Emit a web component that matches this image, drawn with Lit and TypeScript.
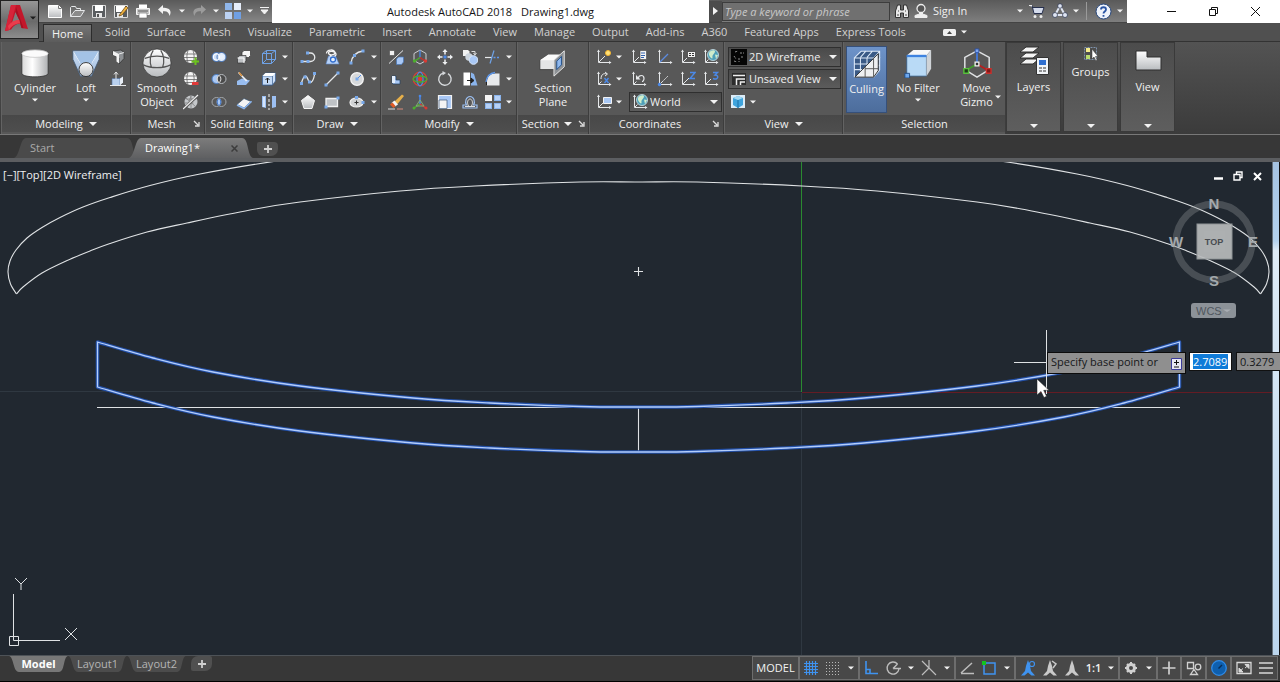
import { LitElement, html, svg, css } from "lit";
import type { SVGTemplateResult, TemplateResult } from "lit";
import { customElement } from "lit/decorators.js";
import { classMap } from "lit/directives/class-map.js";

type Point = [number, number];

/** Catmull-Rom spline through the points, written as cubic path segments. */
function spline(points: Point[]): string {
  let d = "";
  for (let i = 0; i < points.length - 1; i++) {
    const p0 = points[Math.max(i - 1, 0)];
    const p1 = points[i];
    const p2 = points[i + 1];
    const p3 = points[Math.min(i + 2, points.length - 1)];
    d += `C${p1[0] + (p2[0] - p0[0]) / 6} ${p1[1] + (p2[1] - p0[1]) / 6} ${p2[0] - (p3[0] - p1[0]) / 6} ${p2[1] - (p3[1] - p1[1]) / 6} ${p2[0]} ${p2[1]}`;
  }
  return d;
}

const AXIS = 638.5;
const mirror = (points: Point[]): Point[] =>
  points.map(([x, y]): Point => [2 * AXIS - x, y]).reverse();

const outerHalf: Point[] = [
  [16.5, 294], [10.5, 284], [8, 272], [10, 261], [16, 250], [27, 238], [42, 227.5], [60, 217.5], [83, 207],
  [110, 197.5], [150, 185.5], [200, 174], [277, 161], [400, 146], [520, 139], [638.5, 137],
];
const innerHalf: Point[] = [
  [16.5, 294], [23, 287], [42, 273], [66, 261], [90, 251], [110, 243.5], [147, 232], [187, 223],
  [250, 210], [300, 202], [400, 191], [475, 186], [580, 182], [638.5, 182],
];
const bladeHalf: Point[] = [
  [97.5, 342], [153, 358], [213, 372], [300, 386], [413, 398], [490, 403], [580, 406.5], [638.5, 407],
];

const whole = (half: Point[]) => spline([...half, ...mirror(half).slice(1)]);
const bladePath =
  `M97.5 342${whole(bladeHalf)}L1179.5 387` +
  spline([...bladeHalf, ...mirror(bladeHalf).slice(1)].map(([x, y]): Point => [x, y + 45]).reverse()) +
  "Z";

const W = "#e6e8ea";
const axes = svg`<path d="M2.500 1.500v12h12" fill="none" stroke=${W}/><path d="M1 3l1.500-2.500L4 3zM13 12l2.500 1.500L13 15z" fill=${W}/><path d="M3 13l2.500-2.500" stroke=${W}/>`;

const icons: Record<string, SVGTemplateResult> = {
  new: svg`<path d="M1.500 2.500h10l3 3v9h-13z" fill="url(#pale)" stroke="#fff"/><path d="M11.500 2.500v3h3" fill="none" stroke="#777"/>`,
  open: svg`<path d="M1.500 13.500v-9l1-1h4l1 2h4v2" fill="none" stroke=${W}/><path d="M1.500 13.500L6 7.500h9.500l-4 6z" fill="#8b8b8b" stroke=${W}/>`,
  save: svg`<path d="M1.500 2.500h13v12h-13z" fill="#5a5d60" stroke="#ddd"/><path d="M4 2h8v6H4z" fill="#fff"/><path d="M5 10h6v4H5z" fill="#e8e8e8"/><path d="M6 11h2v3H6z" fill="#555"/>`,
  saveas: svg`<path d="M1.500 2.500h13v12h-13z" fill="#5a5d60" stroke="#ddd"/><path d="M3 3h9v6H3z" fill="#fff"/><path d="M4 10h6v4H4z" fill="#e8e8e8"/><path d="M7 11l6-8 2 2-6 7-3 1z" fill="#efb23e" stroke="#5c3d12" stroke-width=".7"/>`,
  print: svg`<path d="M4 1.500h8v4H4z" fill="#fff"/><path d="M1.500 5.500h13v6h-13z" fill="#c9c9c9" stroke="#f5f5f5"/><path d="M3 8h10" stroke="#555"/><path d="M4 10h8v5H4z" fill="#fff" stroke="#666" stroke-width=".6"/>`,
  undo: svg`<path d="M6 2L1 6.500 6 11V8.300c4-.5 6 1.200 6.500 4.700C15.500 8 12 4.300 6 4.800z" fill="#f2f2f2"/>`,
  redo: svg`<path d="M10 2l5 4.500-5 4.500V8.300C6 7.800 4 9.500 3.500 13 .5 8 4 4.300 10 4.800z" fill="#9b9b9b"/>`,
  workspace: svg`<path d="M0 0h7v7H0z" fill="#8fb6ea"/><path d="M9 0h7v7H9z" fill="#e6eefb"/><path d="M0 9h7v7H0z" fill="#bcd2f3"/><path d="M9 9h7v7H9z" fill="#6f9fe3"/>`,
  sweep: svg`<path d="M3 2l8-1 3 2.500v6L9 15v-6L3 6z" fill="#8e9194" stroke="#2e2e2e" stroke-width=".7"/><path d="M3 2l6 3v9.500l-2.500-2V7.500L3 6z" fill="#f2f2f2"/><path d="M9 5l5-1.500" stroke="#fff" stroke-width=".8"/>`,
  presspull: svg`<path d="M2 7.500h8v7H2z" fill="#b9d0ee" stroke="#4d6fa0" stroke-width=".6"/><path d="M10 7.500l3-2v6l-3 3z" fill="#e8eef6"/><path d="M6 8V1.500M4 3.500l2-2.500 2 2.500M0 14.500h16" fill="none" stroke=${W}/>`,
  meshMore: svg`${ball()}<path d="M8.500 11.500h3v-3h2v3h2.500v2h-2.500V16h-2v-2.500h-3z" fill="#6cc51d"/>`,
  meshLess: svg`${ball()}<path d="M9 11h6.500v3H9z" fill="#e03a3a"/>`,
  meshRefine: svg`<circle cx="8" cy="8" r="6.500" fill="#c4c7ca"/><path d="M3 4l10 9M1.500 9h9M8 1.500v13M3 5h10M4 13l4-11" stroke="#777" stroke-width=".7" fill="none"/><path d="M0 15.500L15.500 1" stroke="#555" stroke-width="2.500"/><path d="M0 15L15 1" stroke="#f0f0f0" stroke-width="1.200"/>`,
  union: svg`<circle cx="5.500" cy="8" r="4.500" fill="#cfe0f8" stroke="#3f6fb5"/><circle cx="10.500" cy="8" r="4.500" fill="#e6effb" stroke="#3f6fb5"/><circle cx="5.500" cy="8" r="3.200" fill="none" stroke="#fff"/><circle cx="10.500" cy="8" r="3.200" fill="none" stroke="#dbe8fb"/>`,
  subtract: svg`<circle cx="5.500" cy="8" r="4.500" fill="#a9c8f5" stroke="#4b7cc0"/><circle cx="10.500" cy="8" r="4.500" fill="#4a4a4a" stroke="#b8bcc1"/><path d="M8 4.300a4.500 4.500 0 0 1 0 7.400a4.500 4.500 0 0 1 0-7.400z" fill="none" stroke="#dcdcdc"/>`,
  intersect: svg`<circle cx="5.500" cy="8" r="4.500" fill="none" stroke="#a4a8ad"/><circle cx="10.500" cy="8" r="4.500" fill="none" stroke="#a4a8ad"/><path d="M8 4.300a4.500 4.500 0 0 1 0 7.400a4.500 4.500 0 0 1 0-7.400z" fill="#a9c8f5" stroke="#3e74c8"/>`,
  extrudeFace: svg`<path d="M6 3.500L8 1.500h6.500v5l-2 2H6z" fill="#f5f5f5" stroke="#333" stroke-width=".7"/><path d="M1.500 9l2-2.500h6.500v5L8 14H1.500z" fill="#bfc2c5" stroke="#333" stroke-width=".7"/><path d="M1.500 9H8v5" fill="none" stroke="#fff"/>`,
  slice: svg`<path d="M1 10l5-2.500 8 2-4 4.500H1z" fill="#98bdf0"/><path d="M3 1l8.500 8.500-1.500 1L2 2z" fill="#e9eef5"/><path d="M3 1.500L6 5" stroke="#d98f3b" stroke-width="1.500"/>`,
  thicken: svg`<path d="M1 10.500l7-6 7 3-7 6.500z" fill="#f4f4f4" stroke="#39536f" stroke-width=".7"/><path d="M1 11l7 3.500 7-6.500v-1" fill="none" stroke="#8ab4ec" stroke-width="1.500"/>`,
  solidBox: svg`<path d="M1.500 4.500h9v10h-9zM5.500 1.500h9v9h-9zM1.500 4.500l4-3M10.500 4.500l4-3M10.500 14.500l4-4M1.500 14.500l4-4" fill="none" stroke="#6fa2e6"/>`,
  imprint: svg`<path d="M1.500 5l3-3h10v8l-3 4h-10z" fill="#cfe1f8" stroke="#3a5f90" stroke-width=".7"/><path d="M1.500 5h10v9h-10z" fill="#c3d9f5" stroke="#3a5f90" stroke-width=".7"/><path d="M6.500 12V7M4.500 9l2-2 2 2" fill="none" stroke="#1c1c1c"/><path d="M1.500 5h10l3-3h-10z" fill="#fff"/>`,
  separate: svg`<path d="M1 2h4v12l-4-1zM15 2h-4v12l4-1z" fill="#9dc0f2"/><path d="M2 3h2v10H2z" fill="#d5e5fb"/><path d="M8 0v3M8 5v3M8 10v2M8 14v2" stroke="#f4f4f4"/>`,
  polyline: svg`<path d="M2 12.500h8.500a3.500 3.500 0 0 0 0-8.500H8" fill="none" stroke=${W} stroke-width="1.300"/>${dots([[2, 12.5], [8, 12.5], [7.5, 4]])}`,
  helix: svg`<path d="M2 15l2.500-8h7L15 15z" fill="#b7d1f6" stroke="#5a8ad0" stroke-width=".6"/><path d="M2.500 4.500c0-4.500 8.500-4.500 8.500-.8 0 2.500-6.500 3-6.500.3 0-2.500 7-2 7.500 1 .5 3-5.500 3.500-6 1" fill="none" stroke="#f4f4f4" stroke-width="1.300"/><circle cx="9" cy="10.500" r="2.500" fill="#e6effb" stroke="#2e6ccf" stroke-width="1.300"/>`,
  arc: svg`<path d="M2 14C3 7 7 3 14 2" fill="none" stroke=${W} stroke-width="1.300"/>${dots([[2, 14], [5.5, 6.5], [14, 2]])}`,
  splineFit: svg`<path d="M1.500 12C4 3 6.500 4 8 8.500s5 4 6.500-5" fill="none" stroke=${W} stroke-width="1.300"/>${dots([[1.5, 12.5], [5, 6], [9.5, 11], [14.5, 2.5]])}`,
  line: svg`<path d="M2 14L14 2" stroke=${W} stroke-width="1.300"/>${dots([[2, 14], [14, 2]])}`,
  circle: svg`<circle cx="8" cy="8" r="6.300" fill="#d6d8da" stroke="#f5f5f5" stroke-width="1.300"/><path d="M8 8l4-4" stroke="#4b89e8"/>${dots([[8, 8]])}`,
  polygon: svg`<path d="M8 1.500l6.500 5-2.500 8H4l-2.500-8z" fill="url(#pale)" stroke="#f6f6f6"/>`,
  rect: svg`<path d="M2 4.500h11.500v8H2z" fill="#bfc2c5" stroke="#f2f2f2" stroke-width="1.300"/>${dots([[2, 13], [14, 4]])}`,
  ellipse: svg`<ellipse cx="7.500" cy="8.500" rx="6.500" ry="4.500" fill="#d0d2d4" stroke="#f2f2f2" stroke-width="1.200"/><path d="M5.500 8.500h4M7.500 6.500v4" stroke="#333"/>${dots([[7.5, 3.5], [14, 8.5]])}`,
  align3d: svg`<path d="M1 14.500L15 1.500" stroke=${W}/><path d="M1.500 1.500h5v5h-5z" fill="#f2f2f2" stroke="#444" stroke-width=".6"/><path d="M8.500 10l2-2h5v5l-2 2.500h-5z" fill="#a9c8f5" stroke="#4677b8" stroke-width=".7"/>`,
  gizmoMove: svg`<path d="M8 1l6 3.500v7L8 15l-6-3.500v-7z" fill="none" stroke="#c9ccd0"/><path d="M8 8.500v-7" stroke="#4b89e8" stroke-width="1.300"/><path d="M8 8.500L3 12" stroke="#4caf2e" stroke-width="1.400"/><path d="M8 8.500l5 3.500" stroke="#c9302c" stroke-width="1.400"/><circle cx="2.500" cy="12" r="1.700" fill="#4caf2e"/><circle cx="13.500" cy="12" r="1.700" fill="#d83a34"/>`,
  move: svg`<path d="M8 0l2.600 3H5.400zM8 16l2.600-3H5.400zM0 8l3-2.600v5.200zM16 8l-3-2.600v5.200z" fill="#eef0f2"/><path d="M8 2.500v3M8 10.500v3M2.500 8h3M10.500 8h3" stroke="#eef0f2" stroke-width="1.500"/><path d="M6.500 6.500h3v3h-3z" fill="#4b89e8"/>`,
  copy: svg`<path d="M1 1h5l1.500 1.500V7H1z" fill="#f2f2f2"/><circle cx="7" cy="8" r="3.700" fill="#cdd5de"/><circle cx="11.500" cy="11" r="4.300" fill="#a9c8f5" stroke="#d6e6fb"/><path d="M9.500 2.500H13V5M11.500 4L13 6l1.500-2" fill="none" stroke="#ddd"/>`,
  trim: svg`<path d="M0 8.500h7" stroke=${W} stroke-width="1.200"/><path d="M8.500 8.500h2M12 8.500h2" stroke="#5f98ea" stroke-width="1.300"/><path d="M5 14.500l4-13" stroke="#6fa2e6" stroke-width="1.200"/>`,
  fillet3d: svg`<path d="M4 5h4v4h4v4H5L4 12z" fill="#a9c8f5" stroke="#24405f" stroke-width=".7"/><path d="M4 5h3v7H4z" fill="#e5effc"/>`,
  gizmoRotate: svg`<circle cx="8" cy="8" r="6.800" fill="none" stroke="#d0413b" stroke-width="1.300"/><ellipse cx="8" cy="8" rx="3" ry="6.800" fill="none" stroke="#4b89e8" stroke-width="1.300"/><ellipse cx="8" cy="8" rx="6.800" ry="3" fill="none" stroke="#4caf2e" stroke-width="1.300"/><circle cx="8" cy="8" r="2.300" fill="#e63a2e"/>`,
  rotate: svg`<path d="M6 2.200A6.200 6.200 0 1 0 11 2.700" fill="none" stroke="#d5d8db" stroke-width="1.400"/><path d="M5.500 0v4.500L9 2z" fill="#d5d8db"/>`,
  mirrorIc: svg`<path d="M1.500 1.500H8v13H1.500z" fill="#fff"/><path d="M9 1.500l3 1.500 3.500 11.500H9z" fill="#8ab4ec"/><path d="M5 9.500h5M9 7l3 2.500L9 12z" stroke="#222" fill="#222"/>`,
  fillet: svg`<path d="M2 14.500V10c0-5 4-7.500 8-7.500h4.500v12z" fill="#e8eaec"/><path d="M1.500 14V10c0-5 4-8 8-8" fill="none" stroke="#222"/><path d="M1 11C2 4 6 2 10 1.500" fill="none" stroke="#5f98ea" stroke-width="1.300"/>`,
  erase: svg`<path d="M6 8l8-7.500L16 2l-6.500 8z" fill="#e7b04a"/><path d="M3.500 9l3-2.500 3.500 4L7 12.500z" fill="#f4f4f4"/><path d="M2 10.500L4.500 8.500l3 3.500-2 2z" fill="#e05a25"/><path d="M0 15h7" stroke="#ddd"/><path d="M9 15h6" stroke="#d98a7a"/>`,
  gizmoScale: svg`<path d="M8 10V2" stroke="#4b89e8" stroke-width="1.500"/><path d="M8 10l-6 4" stroke="#4caf2e" stroke-width="1.500"/><path d="M8 10l6 4" stroke="#d83a34" stroke-width="1.500"/><path d="M8 6l4 6H4z" fill="none" stroke="#7fae74"/><circle cx="8" cy="2" r="1.300" fill="#4b89e8"/><circle cx="2" cy="14" r="1.500" fill="#4caf2e"/><circle cx="14" cy="14" r="1.500" fill="#d83a34"/>`,
  scale: svg`<path d="M1.500 1.500h13v13h-13z" fill="#a9c8f5" stroke="#f2f2f2" stroke-width="1.200"/><path d="M2 6h8v8.500H2z" fill="#f4f4f4" stroke="#3c5878" stroke-width=".7"/>`,
  offset: svg`<path d="M1 14h14v-3h-3.500c2-3 .5-8.500-3.500-8.500S2.500 8 4.500 11H1z" fill="none" stroke="#9cc0f2" stroke-width="1.200"/><path d="M3 12.500h10M6.500 12C4.500 8.500 6 5 8 5s3.500 3.500 1.500 7" fill="none" stroke="#e0e2e4"/>`,
  array: svg`<path d="M0 1h7v6H0z" fill="#f5f5f5"/><path d="M9 1h7v6H9zM0 9h7v6H0zM9 9h7v6H9z" fill="#8ab4ec"/><path d="M10 2h5v4h-5zM1 10h5v4H1zM10 10h5v4h-5z" fill="#b7d1f6"/>`,
  ucs: svg`${axes}<circle cx="12" cy="4" r="2.500" fill="#ffe27a" stroke="#f5b52c"/><path d="M5 11l4-4" stroke=${W}/>`,
  ucsX: svg`${axes}<path d="M5 8c0-5 3-6 6-5M9 1l2.500 2L9 5" fill="none" stroke=${W}/><path d="M8.500 7l4 5M12.500 7l-4 5" stroke="#4b89e8" stroke-width="1.400"/>`,
  ucsView: svg`${axes}<path d="M7.500 3.500h8v6h-8z" fill="#a9c8f5" stroke="#f2f2f2"/><path d="M4 12l3-3" stroke=${W}/>`,
  ucsNamed: svg`${axes}<path d="M9 1.500h6.500v9H9z" fill="#f5f5f5" stroke="#444" stroke-width=".6"/><path d="M10 4h4M10 6.500h4M10 8.500h3" stroke="#3262ad"/><path d="M4 12l4-4" stroke=${W}/>`,
  ucsPrev: svg`${axes}<path d="M7 7.500c1-4 6-4 6 0 0 1.500-1 3-2 3" fill="none" stroke=${W} stroke-width="1.200"/><path d="M5 4v4.500h4.500z" fill=${W}/>`,
  ucsFace: svg`${axes}<path d="M3 13l8-8" stroke="#5c8be0" stroke-width="1.300"/>`,
  ucsOrigin: svg`${axes}<path d="M3 13l8-8" stroke=${W} stroke-dasharray="2 1"/><circle cx="2.500" cy="13.500" r="1.700" fill="#4b89e8"/>`,
  ucsObject: svg`${axes}<path d="M7.500 2.500h8v6h-8z" fill="#f2f2f2" stroke="#333" stroke-width=".7"/><path d="M9 4.500h5M9 6.500h5" stroke="#333" stroke-dasharray="2 1"/><path d="M4 12l3-3" stroke=${W}/>`,
  ucsZ: svg`${axes}<path d="M10 1.500h5l-5 6h5" fill="none" stroke="#4b89e8" stroke-width="1.400"/><path d="M4 12l5-5" stroke=${W}/>`,
  ucs3: svg`${axes}<path d="M10 1.500h4.500L12 4c4 0 3.500 4.500-.5 4L10 7.500" fill="none" stroke="#4b89e8" stroke-width="1.400"/><path d="M4 12l4-4" stroke=${W}/>`,
  ucsWorld: svg`${axes}<circle cx="10" cy="6" r="5.500" fill="#4d9fb8" stroke="#cfe6ee" stroke-width=".8"/><path d="M6 4c1-3 6-3.500 6-1.500S9 5.500 9.500 8.500 5 7 6 4zM12 5.500l3 .5-2 4z" fill="#cfeccb"/>`,
  style2d: svg`<path d="M0 0h16v16H0z" fill="#050505"/><path d="M4 3l3-1M9 4h4M3 7l2 3M8 9v4M10 8h3M3 12l3 1" stroke="#8d8d8d" stroke-dasharray="2 1"/>`,
  savedView: svg`<path d="M1 2h14v12H1z" fill="#2c2c2c"/><path d="M2 4.500h12M5.500 14V8H14M9.500 14v-3H14" fill="none" stroke="#eee" stroke-width="1.500"/>`,
  viewCubeIc: svg`<path d="M1 1h14v13H1z" fill="#dcecf8"/><path d="M3 4l5-2 5 2v7l-5 3-5-3z" fill="#3fa4dd"/><path d="M3 4l5 2 5-2-5-2z" fill="#a6dcf7"/><path d="M8 6v8" stroke="#1a6fa5"/>`,
};

function ball() {
  return svg`<circle cx="7.500" cy="7.500" r="6.500" fill="#f4f4f4"/><path d="M1.500 5h12M1 8.500h13M2 11.500h11" stroke="#666" stroke-width=".8" fill="none"/><path d="M5 1.500c-1.500 4-1.500 8 0 12M10 1.500c1.500 4 1.500 8 0 12" stroke="#666" stroke-width=".8" fill="none"/>`;
}
function dots(at: Point[]) {
  return at.map(([x, y]) => svg`<rect x=${x - 1.5} y=${y - 1.5} width="3" height="3" fill="#79a9ea"/>`);
}

const bigIcons: Record<string, SVGTemplateResult> = {
  cylinder: svg`<path d="M2 6v21c0 5 28 5 28 0V6z" fill="url(#drum)" stroke="#2f2f2f" stroke-width=".8"/><ellipse cx="16" cy="6" rx="14" ry="4" fill="#fbfbfb" stroke="#c4c4c4" stroke-width=".8"/>`,
  loft: svg`<path d="M2 3h28v9l-8 18H10L2 12z" fill="url(#blue)" stroke="#3b536f" stroke-width=".8"/><path d="M3 4l7 12M29 4l-7 12" stroke="#fff"/><path d="M3 4h26l-7 12H10z" fill="#a3c2e6"/><circle cx="16" cy="23" r="7.500" fill="url(#pale)" stroke="#333"/>`,
  smooth: svg`<circle cx="16" cy="16" r="15" fill="url(#pale)" stroke="#333" stroke-width=".8"/><path d="M3 11c8-3 18-3 26 0M1.500 18c8 4 21 4 29 0M12 2.500c-4 6-4 12-2 18M20 2.500c4 6 4 12 2 18" fill="none" stroke="#555" stroke-width="1.300"/>`,
  section: svg`<path d="M2 13l9-6h12v11l-4 5H2z" fill="#e4e5e6" stroke="#333" stroke-width=".8"/><path d="M2 13h16l6-6H11z" fill="#fbfbfb"/><path d="M17 13l11-10v17L17 30z" fill="#8d9195" stroke="#e9e9e9"/><path d="M20 14l5-5v9l-5 5z" fill="#8fb8ee" stroke="#1f4d86"/>`,
  culling: svg`<path d="M3 9l8-7h19l-3 19-6 9H3z" fill="#3a5a86"/><path d="M2.500 9.500h21v20h-21zM9 9v20M16 9v20M3 16h20M3 22h20M9.500 2.500h20v20M2.500 9.500l7-7M23.500 9.500l6-7M23.500 29.500l6-7M16 9l6-7M9 9l6-7M26 6v20M24 16l6-7M24 22l6-6" fill="none" stroke="#dde9f8" stroke-width="1.100"/><path d="M3 30L23 10l5-5v18l-5 7z" fill="#eef0f2" stroke="#2e2e2e"/><path d="M23 10v20M14 19v11M14 21h14" stroke="#555"/>`,
  nofilter: svg`<path d="M4 8h21v22H4z" fill="#b9daf6" stroke="#315a85" stroke-width=".8"/><path d="M4 8l7-6h19l-5 6z" fill="#f8f8f8"/><path d="M25 8l5-6v20l-5 8z" fill="#cfd3d7"/><path d="M4 8.500h21" stroke="#3e83e0" stroke-width="2.500"/><path d="M2 27h5v5H2z" fill="#6ea8ee" stroke="#1f4d86"/>`,
  gizmo: svg`<path d="M16 3l13 7v13l-13 8-13-8V10z" fill="none" stroke="#dfe1e3" stroke-width="1.600"/><path d="M16 16V3" stroke="#4478d8" stroke-width="2"/><path d="M16 17L4 24" stroke="#3f9a2c" stroke-width="2"/><path d="M16 17l12 7" stroke="#b52020" stroke-width="2"/><path d="M14 1h4v4h-4z" fill="#7fa6ee" stroke="#2c4fa0"/><path d="M2 22h5v5H2z" fill="#1d3a1a" stroke="#58c03c" stroke-width="1.500"/><path d="M26 22h5v5h-5z" fill="#7c1b1b" stroke="#c9302c" stroke-width="1.500"/><path d="M14 15h4v4h-4z" fill="#333" stroke="#f2f2f2" stroke-width="1.400"/>`,
  layers: svg`<path d="M2 19l6-5h13l-6 5zM2 13l6-5h13l-6 5zM2 7l6-5h13l-6 5z" fill="#f4f4f4" stroke="#2e2e2e"/><path d="M18.500 12.500h12v17h-12z" fill="#f1f4f8" stroke="#333"/><path d="M21 15h7v5h-7z" fill="#2f6fd0"/><path d="M21 23h7M21 26h7" stroke="#333" stroke-dasharray="3 1"/>`,
  groups: svg`<path d="M9.500 9.500h12v12h-12z" fill="none" stroke="#7f93ad" stroke-dasharray="2 1"/><path d="M11 10h4v4h-4z" fill="#f4eb8c"/><path d="M11 17h4v4h-4z" fill="#b9dc6e"/><path d="M17 11v10l2-2 2 4 1-1-1.500-3.500H23z" fill="#fff" stroke="#333" stroke-width=".5"/>`,
  viewport: svg`<path d="M4 6h11v6h14v13H4z" fill="url(#pale)" stroke="#2f2f2f"/>`,
};

interface Item { name: string; label: string }
const i = (name: string, label: string): Item => ({ name, label });

const ribbonTabs = ["Home", "Solid", "Surface", "Mesh", "Visualize", "Parametric", "Insert", "Annotate", "View", "Manage", "Output", "Add-ins", "A360", "Featured Apps", "Express Tools"];

@customElement("app-root")
export class AppRoot extends LitElement {
  static styles = css`
    :host { display: flex; flex-direction: column; height: 100vh; min-width: 1180px; overflow: hidden; background: #373737; color: #f0f0f0; font: 11px/14px "Open Sans", "Noto Sans", sans-serif; }
    * { box-sizing: border-box; }
    button, input, select { font: inherit; color: inherit; margin: 0; padding: 0; border: 0; background: none; }
    button { display: flex; align-items: center; justify-content: center; flex: none; white-space: nowrap; }
    svg { display: block; flex: none; }
    .defs { height: 0; width: 0; }

    .head { display: grid; grid-template-columns: 39px 1fr; grid-template-rows: 23px 19px; background: #505050; }
    .app { grid-row: 1 / 3; align-self: start; height: 39px; background: linear-gradient(#969696, #6a6a6a 55%, #8d8d8d); border: 1px solid #222; justify-content: space-between; padding: 0 2px 4px 3px; }
    .title { display: flex; background: #fff; }
    .qat { display: flex; align-items: center; width: 233px; padding-left: 5px; background: linear-gradient(#5a5a5a, #868686); border-bottom: 1px solid #444; }
    .qat button { width: 22px; height: 20px; }
    .qat .drop { width: 12px; }
    .qat .last { width: 16px; }
    .name { flex: 1; display: flex; align-items: center; justify-content: center; gap: 9px; color: #141414; }
    .info { display: flex; align-items: center; width: 418px; padding-right: 2px; background: linear-gradient(#5a5a5a, #7e7e7e); border-bottom: 1px solid #444; }
    .info .toggle { width: 13px; height: 21px; background: #4c4c4c; }
    .search { width: 168px; height: 19px; padding: 0 2px; background: #707070; border: 1px solid #3d3d3d; font-style: italic; }
    .search::placeholder { color: #c8c8c8; opacity: 1; }
    .info .tool { width: 23px; height: 20px; }
    .sign { gap: 4px; justify-content: flex-start; }
    .grow { flex: 1; }
    .info .drop { width: 10px; }
    .rule { width: 1px; height: 18px; margin: 0 5px; background: #9a9a9a; }
    .win { display: flex; width: 153px; padding-left: 23px; }
    .win button { width: 42px; height: 22px; }

    .tabs { display: flex; gap: 1px; padding-left: 4px; border-bottom: 1px solid #333; }
    .tabs button { padding: 0 8px; color: #d2d2d2; }
    .tabs .on { background: linear-gradient(#747474, #5c5c5c); border: 1px solid #2c2c2c; border-bottom: 0; color: #f4f4f4; margin: 1px 4px -1px 0; }
    .tabs .collapse { margin-left: 20px; gap: 5px; }

    .ribbon { display: flex; height: 93px; padding-left: 1px; background: linear-gradient(#535353, #3b3b3b); border-bottom: 1px solid #787878; }
    .panel { display: flex; flex-direction: column; background: #585858; border-right: 1px solid #3d3d3d; border-left: 1px solid #636363; padding-bottom: 2px; }
    .body { flex: 1; display: grid; grid-template-rows: 22px 22px 23px; align-content: start; align-items: center; justify-items: center; padding-top: 4px; }
    .caption { display: flex; align-items: center; justify-content: center; gap: 6px; height: 17px; padding: 0 4px; background: linear-gradient(#484848, #4e4e4e); white-space: nowrap; }
    .caption .launch { margin-left: auto; }
    .caption .lead { margin-left: auto; }
    .modeling { width: 130px; } .modeling .body { grid-template-columns: 50px 52px 12px; padding-left: 8px; }
    .mesh { width: 74px; } .mesh .body { grid-template-columns: 50px 18px; }
    .solid { width: 88px; } .solid .body { grid-template-columns: 24px 26px 24px 8px; padding-left: 1px; }
    .draw { width: 88px; } .draw .body { grid-template-columns: 24px 24px 26px 8px; padding-left: 2px; }
    .modify { width: 136px; } .modify .body { grid-template-columns: 24px 24px 26px 24px 22px 10px; padding-left: 2px; }
    .section { width: 72px; } .section .caption { gap: 5px; padding: 0 3px; }
    .coords { width: 135px; } .coords .body { grid-template-columns: 20px 10px 30px 22px 24px 22px; padding-left: 4px; }
    .view { width: 119px; } .view .body { grid-template-columns: 20px 10px 1fr; padding: 4px 1px 0 3px; }
    .select { width: 163px; } .select .body { grid-template-columns: 41px 62px 55px; padding-left: 2px; }
    .ic { width: 100%; height: 22px; }
    .big { grid-row: span 3; flex-direction: column; justify-content: flex-start; width: 100%; height: 67px; gap: 1px; }
    .big .pic { height: 34px; display: flex; align-items: center; }
    .big .menu { margin-top: 2px; }
    .pressed { background: linear-gradient(#6d93c9, #4d6d9c); border: 1px solid #36507a; }
    .gizmo { position: relative; }
    .gizmo .menu { position: absolute; right: 3px; bottom: 14px; }
    .combo { position: relative; height: 20px; background: linear-gradient(#4a4a4a, #5c5c5c); border: 1px solid #2f2f2f; display: flex; align-items: center; padding-left: 2px; gap: 2px; }
    .combo select { appearance: none; flex: 1; min-width: 0; height: 18px; }
    .combo option { color: #222; }
    .combo .menu { position: absolute; right: 3px; top: 7px; pointer-events: none; }
    .view .combo { grid-column: 1 / -1; width: 100%; }
    .world { grid-column: 3 / 7; width: 93px; justify-self: end; }
    .folds { display: flex; }
    .fold { display: flex; flex-direction: column; align-items: center; justify-content: space-between; width: 55px; height: 90px; margin: 0 2px 0 0; padding-bottom: 3px; background: linear-gradient(#4c4c4c, #5e5e5e); border: 1px solid #3a3a3a; }
    .fold .face { flex-direction: column; gap: 1px; }

    .files { display: flex; height: 27px; padding: 3px 0 0 20px; border-bottom: 4px solid #5c5e61; background: #373737; }
    .file { position: relative; width: 115px; height: 20px; padding: 0 12px 0 10px; justify-content: space-between; color: #aaa; }
    .file .shape, .sheet .shape { position: absolute; inset: 0; width: 100%; height: 100%; overflow: visible; }
    .file span, .file .x, .sheet span { position: relative; }
    .file.on, .sheet.on { color: #fff; }
    .plus { width: 21px; height: 14px; margin: 4px 0 0 7px; background: #505050; border-radius: 2px 4px 7px 6px; }

    .stage { flex: 1; position: relative; min-height: 0; background: #212830; overflow: hidden; }
    .drawing { width: 100%; height: 100%; }
    .scroll { position: absolute; top: 0; right: 0; bottom: 0; width: 8px; border-left: 1px solid #68737c; border-right: 1px solid #111; background: linear-gradient(#a5c3e2, #b4d2ee 16%, #deebf6 18%, #bcd6ee); }
    .vlabel { position: absolute; left: 3px; top: 6px; display: flex; }
    .mdi { position: absolute; top: 7px; right: 16px; display: flex; gap: 5px; }
    .mdi button { width: 14px; height: 14px; }
    .cube { position: absolute; top: 32px; right: 20px; width: 92px; height: 100px; font: bold 15px/16px "Liberation Sans", Arial, sans-serif; }
    .face-name { font-size: 9px; }
    .wcs { position: absolute; top: 141px; right: 44px; width: 45px; height: 15px; padding: 0 5px; justify-content: space-between; background: #8c9298; border-radius: 3px; color: #4f565d; font: 11px/14px "Liberation Sans", Arial, sans-serif; }
    .prompt { position: absolute; top: 190px; left: 1047px; display: flex; align-items: flex-start; height: 22px; gap: 3px; color: #16181a; }
    .say { display: flex; align-items: flex-start; width: 139px; height: 22px; padding: 2px 3px 0; justify-content: space-between; background: #8f8f8f; border: 1px solid #0c0c0c; white-space: nowrap; }
    .say svg { margin-top: 3px; }
    .val { display: flex; align-items: center; height: 19px; padding: 0 3px; width: 43px; background: #fff; border: 1px solid #111; }
    .val input { width: 35px; height: 15px; }
    .val.live input { background: #0f7bd8; color: #fff; }
    .val.idle { background: #8f8f8f; width: 48px; margin-left: 1px; }

    .foot { display: flex; height: 27px; padding-bottom: 1px; background: #373737; border-top: 1px solid #4d5257; border-bottom: 1px solid #000; justify-content: space-between; }
    .sheets { display: flex; padding-left: 9px; }
    .sheet { position: relative; width: 59px; height: 16px; color: #b4b4b4; }
    .sheet.on { font-weight: bold; }
    .foot .plus { height: 15px; margin: 0 0 0 5px; border-radius: 7px 2px 7px 2px; }
    .status { display: flex; margin-right: 2px; }
    .box { display: flex; align-items: center; background: #484848; border: 1px solid #6d6d6d; color: #f2f2f2; }
    .box button { height: 22px; width: 22px; }
    .box .drop { width: 14px; }
    .box .word { width: 45px; }
    .box .ratio { width: 21px; font-weight: 600; }
    .pad { padding-left: 1px; }
  `;

  private arrow = (w = 7): TemplateResult =>
    html`<svg class="menu" width=${w} height="4" viewBox="0 0 8 4" aria-hidden="true"><path d="M0 0h8L4 4z" fill="#f2f2f2"/></svg>`;

  private glyph = (name: string, size = 16) =>
    html`<svg width=${size} height=${size} viewBox="0 0 16 16" aria-hidden="true">${icons[name]}</svg>`;

  private small = (m: Item) => html`<button class="ic" aria-label=${m.label}>${this.glyph(m.name)}</button>`;
  private drop = (label: string) => html`<button class="drop" aria-label=${`${label} menu`}>${this.arrow(6)}</button>`;
  private dropCell = (label: string) => html`<button class="ic" aria-label=${`${label} menu`}>${this.arrow(6)}</button>`;

  private big = (name: string, lines: string[], opts: { menu?: boolean; extra?: string } = {}) => html`
    <button class=${`big ${opts.extra ?? ""}`}>
      <span class="pic"><svg width="30" height="30" viewBox="0 0 32 32" aria-hidden="true">${bigIcons[name]}</svg></span>
      <span>${lines.map((t, n) => (n ? html`<br />${t}` : t))}</span>
      ${opts.menu ? this.arrow(6) : ""}
    </button>`;

  private panel = (cls: string, caption: string, body: unknown, menu = false, launch = false) => html`
    <section class=${`panel ${cls}`}>
      <div class="body">${body}</div>
      <div class="caption">
        <span class=${classMap({ lead: launch })}>${caption}</span>${menu ? this.arrow(8) : ""}
        ${launch ? html`<button class="launch" aria-label=${`${caption} settings`}><svg width="7" height="7" viewBox="0 0 7 7"><path d="M1 1l4 4M6 2v4H2" fill="none" stroke="#ddd" stroke-width="1.300"/></svg></button>` : ""}
      </div>
    </section>`;

  private fold = (name: string, label: string, short = false) => html`
    <div class="fold">
      <button class="face">
        <svg width="32" height=${short ? 21 : 36} viewBox=${short ? "0 5 32 21" : "0 -2 32 36"} aria-hidden="true">${bigIcons[name]}</svg>
        <span>${label}</span>
      </button>
      ${this.arrow(8)}
    </div>`;

  private header() {
    return html`
      <header class="head">
        <button class="app" aria-label="Application menu">
          <svg width="24" height="28" viewBox="0 0 24 28"><path d="M7 1h9l8 24-6.500-1-1.300-4.500c-4 .2-7 2.500-9 6L1 27z" fill="#c3172b"/><path d="M11.500 8L8 19c2-1.500 4.500-2.700 7.300-3z" fill="#7d7d7d"/><path d="M11.500 8l3.800 8 1 3.500 1.200 4.500 2 .3L12 3z" fill="#a51022"/><path d="M7 1h5L5 26.200 1 27z" fill="#d6243a"/><path d="M4 22c3-4.500 7-6.500 11.300-6l.9 3.500C11 19.500 7.500 22 5 26z" fill="#ea3d4c"/></svg>
          <svg width="6" height="4" viewBox="0 0 8 4"><path d="M0 0h8L4 4z" fill="#1c1c1c"/></svg>
        </button>
        <div class="title">
          <div class="qat">
            ${[["new", "New"], ["open", "Open"], ["save", "Save"], ["saveas", "Save As"], ["print", "Plot"], ["undo", "Undo"]].map(
              ([n, l]) => html`<button aria-label=${l}>${this.glyph(n)}</button>`)}
            ${this.drop("Undo")}
            <button aria-label="Redo">${this.glyph("redo")}</button>${this.drop("Redo")}
            <button aria-label="Workspace">${this.glyph("workspace")}</button>${this.drop("Workspace")}
            <button class="last" aria-label="Customize"><svg width="9" height="8" viewBox="0 0 9 8"><path d="M0 .5h9M1 3h7L4.500 7z" fill="#f2f2f2" stroke="#f2f2f2"/></svg></button>
          </div>
          <div class="name"><span>Autodesk AutoCAD 2018</span><span>Drawing1.dwg</span></div>
          <div class="info">
            <button class="toggle" aria-label="Toggle search"><svg width="5" height="8" viewBox="0 0 5 8"><path d="M0 0l5 4-5 4z" fill="#f2f2f2"/></svg></button>
            <input class="search" type="search" aria-label="Search" placeholder="Type a keyword or phrase" />
            <button class="tool" aria-label="Find"><svg width="16" height="16" viewBox="0 0 16 16"><path d="M1.500 14.500V8l2-6h3v5h3V2h3l2 6v6.500h-5V10h-3v4.500z" fill="#e9e9e9" stroke="#333"/><path d="M3 12h2M11 12h2M4 8h1M11 8h1" stroke="#444"/></svg></button>
            <button class="sign"><svg width="16" height="16" viewBox="0 0 16 16"><circle cx="8" cy="5.500" r="4" fill="#555" stroke="#eee" stroke-width="1.300"/><path d="M6.500 9v2L2 12.500v2h12v-2L9.500 11V9" fill="#eee" stroke="#eee"/></svg><span>Sign In</span></button>
            <span class="grow"></span>${this.drop("Account")}
            <button class="tool" aria-label="Store"><svg width="16" height="16" viewBox="0 0 16 16"><path d="M0 2.500h3l2 8h8l2-6H4" fill="#d5dcec" stroke="#27304e"/><path d="M0 2.500h3" stroke="#eee"/><circle cx="6" cy="13.500" r="1.500" fill="#eee"/><circle cx="12" cy="13.500" r="1.500" fill="#eee"/></svg></button>
            <button class="tool" aria-label="Autodesk App Store"><svg width="16" height="16" viewBox="0 0 16 16"><path d="M8 3L3 12h10z" fill="none" stroke="#dfe5f2" stroke-width="2"/><circle cx="8" cy="3" r="2.300" fill="#dfe5f2" stroke="#27304e" stroke-width=".7"/><circle cx="3" cy="12" r="2.500" fill="#dfe5f2" stroke="#27304e" stroke-width=".7"/><circle cx="13" cy="12" r="2.500" fill="#dfe5f2" stroke="#27304e" stroke-width=".7"/></svg></button>
            ${this.drop("Apps")}<span class="rule"></span>
            <button class="tool" aria-label="Help"><svg width="17" height="17" viewBox="0 0 17 17"><circle cx="8.500" cy="8.500" r="7.500" fill="#eef3fb" stroke="#27477d"/><path d="M6 6.500C6 3.500 11 3.500 11 6.500c0 2-2.500 2-2.500 4M8.500 12v1.800" fill="none" stroke="#2a55a5" stroke-width="1.800"/></svg></button>
            ${this.drop("Help")}
          </div>
          <div class="win">
            <button aria-label="Minimize"><svg width="11" height="11" viewBox="0 0 11 11"><path d="M1 5.500h9" stroke="#111"/></svg></button>
            <button aria-label="Restore"><svg width="11" height="11" viewBox="0 0 11 11"><path d="M1.500 3.500h6v6h-6zM3.500 3V1.500h6v6H8" fill="none" stroke="#111"/></svg></button>
            <button aria-label="Close"><svg width="11" height="11" viewBox="0 0 11 11"><path d="M1 1l9 9M10 1l-9 9" stroke="#111"/></svg></button>
          </div>
        </div>
        <nav class="tabs">
          ${ribbonTabs.map((t, n) => html`<button class=${classMap({ on: n === 0 })}>${t}</button>`)}
          <button class="collapse" aria-label="Ribbon display"><svg width="13" height="7" viewBox="0 0 13 7"><rect width="13" height="7" rx="1.500" fill="#efefef"/><path d="M4 5h5L6.500 2z" fill="#444"/></svg>${this.arrow(6)}</button>
        </nav>
      </header>`;
  }

  private ribbon() {
    const row = (items: Item[], menu: boolean) => html`${items.map(this.small)}${menu ? this.dropCell(items[items.length - 1].label) : ""}`;
    return html`
      <div class="ribbon">
        ${this.panel("modeling", "Modeling", html`
          ${this.big("cylinder", ["Cylinder"], { menu: true })}${this.big("loft", ["Loft"], { menu: true })}
          ${this.small(i("sweep", "Polysolid"))}${this.small(i("presspull", "Presspull"))}`, true)}
        ${this.panel("mesh", "Mesh", html`
          ${this.big("smooth", ["Smooth", "Object"])}
          ${row([i("meshMore", "Smooth More"), i("meshLess", "Smooth Less"), i("meshRefine", "Refine Mesh")], false)}`, false, true)}
        ${this.panel("solid", "Solid Editing", html`
          ${row([i("union", "Union"), i("extrudeFace", "Extrude Faces"), i("solidBox", "Extract Edges")], true)}
          ${row([i("subtract", "Subtract"), i("slice", "Slice"), i("imprint", "Move Faces")], true)}
          ${row([i("intersect", "Intersect"), i("thicken", "Thicken"), i("separate", "Separate")], true)}`, true)}
        ${this.panel("draw", "Draw", html`
          ${row([i("polyline", "Polyline"), i("helix", "Helix"), i("arc", "Arc")], true)}
          ${row([i("splineFit", "Spline"), i("line", "Line"), i("circle", "Circle")], true)}
          ${row([i("polygon", "Polygon"), i("rect", "Rectangle"), i("ellipse", "Ellipse")], true)}`, true)}
        ${this.panel("modify", "Modify", html`
          ${row([i("align3d", "3D Align"), i("gizmoMove", "3D Move"), i("move", "Move"), i("copy", "Copy"), i("trim", "Trim")], true)}
          ${row([i("fillet3d", "3D Mirror"), i("gizmoRotate", "3D Rotate"), i("rotate", "Rotate"), i("mirrorIc", "Mirror"), i("fillet", "Fillet")], true)}
          ${row([i("erase", "Erase"), i("gizmoScale", "3D Scale"), i("scale", "Scale"), i("offset", "Offset"), i("array", "Array")], true)}`, true)}
        ${this.panel("section", "Section", this.big("section", ["Section", "Plane"]), true, true)}
        ${this.panel("coords", "Coordinates", html`
          ${row([i("ucs", "UCS")], true)}${row([i("ucsNamed", "Named UCS"), i("ucsFace", "Face UCS"), i("ucsObject", "Object UCS"), i("ucsWorld", "World UCS")], false)}
          ${row([i("ucsX", "Rotate X")], true)}${row([i("ucsPrev", "Previous UCS"), i("ucsOrigin", "Origin"), i("ucsZ", "Z-Axis Vector"), i("ucs3", "3-Point")], false)}
          ${row([i("ucsView", "View UCS")], true)}
          <label class="combo world">${this.glyph("ucsWorld")}<select aria-label="Coordinate system"><option>World</option></select>${this.arrow(8)}</label>`, false, true)}
        ${this.panel("view", "View", html`
          <label class="combo">${this.glyph("style2d")}<select aria-label="Visual style"><option>2D Wireframe</option></select>${this.arrow(8)}</label>
          <label class="combo">${this.glyph("savedView")}<select aria-label="Saved view"><option>Unsaved View</option></select>${this.arrow(8)}</label>
          ${row([i("viewCubeIc", "View cube display")], true)}`, true)}
        ${this.panel("select", "Selection", html`
          ${this.big("culling", ["Culling"], { extra: "pressed" })}
          ${this.big("nofilter", ["No Filter"], { menu: true })}
          ${this.big("gizmo", ["Move", "Gizmo"], { menu: true, extra: "gizmo" })}`)}
        <div class="folds">${this.fold("layers", "Layers")}${this.fold("groups", "Groups", true)}${this.fold("viewport", "View")}</div>
      </div>`;
  }

  private fileTab = (label: string, on: boolean) => html`
    <button class=${classMap({ file: true, on })}>
      <svg class="shape" viewBox="0 0 115 20" preserveAspectRatio="none"><path d="M-6 20C0 18 0 0 6 0h101c7 0 5 18 11 20z" fill=${on ? "url(#tabOn)" : "#4a4a4a"} /></svg>
      <span>${label}</span>
      ${on ? html`<svg class="x" width="7" height="7" viewBox="0 0 7 7"><path d="M.5.5l6 6M6.500.5l-6 6" stroke="#3c3c3c" stroke-width="1.500"/></svg>` : ""}
    </button>`;

  private plus = (label: string) => html`<button class="plus" aria-label=${label}><svg width="8" height="8" viewBox="0 0 8 8"><path d="M4 0v8M0 4h8" stroke="#d0d0d0" stroke-width="1.800"/></svg></button>`;

  private stage() {
    return html`
      <main class="stage">
        <svg class="drawing" viewBox="0 162 1280 493" preserveAspectRatio="xMinYMin slice">
          <path d="M0 391.500h801M801.500 393v262" stroke="#2f3841" fill="none"/>
          <path d="M802 392.500h470" stroke="#641c24"/><path d="M801.500 162v230" stroke="#2a8a30"/>
          <g fill="none" stroke="#dfe2e4" stroke-width="1.100">
            <path d=${`M16.500 294${whole(outerHalf)}`}/><path d=${`M16.500 294${whole(innerHalf)}`}/>
            <path d="M634 271.500h9M638.500 267v9"/><path d="M97 407.500h1083M638.500 407v45"/>
          </g>
          <path d=${bladePath} fill="none" stroke="#2350a8" stroke-width="3.500" stroke-linejoin="round"/>
          <path d=${bladePath} fill="none" stroke="#b3cdfb" stroke-width="1.300"/>
          <g fill="none" stroke="#dfe2e4"><path d="M13.500 594v46.500H60M9.500 636.500h9v9h-9z"/><path d="M15 578l6 6 6-6M21 584v6M65 628l12 12M77 628l-12 12"/></g>
          <path d="M1046.500 330v64M1014 362.500h32" stroke="#dfe2e4"/>
          <path d="M1037 379v16l4-3.500 3 6 2.500-1.200-2.800-6h5.300z" fill="#fff" stroke="#222" stroke-width=".5"/>
        </svg>
        <div class="vlabel"><button>[−]</button><button>[Top]</button><button>[2D Wireframe]</button></div>
        <div class="mdi">
          <button aria-label="Minimize drawing"><svg width="10" height="10" viewBox="0 0 10 10"><path d="M0 7.500h9" stroke="#fff" stroke-width="2.500"/></svg></button>
          <button aria-label="Restore drawing"><svg width="10" height="10" viewBox="0 0 10 10"><path d="M1 3.500h6v5.500H1zM3.500 3V1H9v5.500H7.500" fill="none" stroke="#fff" stroke-width="1.400"/></svg></button>
          <button aria-label="Close drawing"><svg width="9" height="9" viewBox="0 0 9 9"><path d="M1 1l7 7M8 1L1 8" stroke="#fff" stroke-width="2"/></svg></button>
        </div>
        <svg class="cube" viewBox="0 0 92 100" role="img" aria-label="View cube">
          <circle cx="46" cy="48" r="38" fill="none" stroke="#8d9396" stroke-opacity=".36" stroke-width="7"/>
          <rect x="29" y="30" width="35" height="35" fill="#b9bbbc" fill-opacity=".92" stroke="#8f9496"/><rect x="36" y="37" width="21" height="21" fill="#adb0b1"/>
          <g fill="#a4a9ac" text-anchor="middle"><text x="46" y="15">N</text><text x="46" y="92">S</text><text x="8" y="53">W</text><text x="85" y="53">E</text></g>
          <text class="face-name" x="46" y="51" text-anchor="middle" fill="#484c50">TOP</text>
        </svg>
        <button class="wcs"><span>WCS</span><svg width="8" height="4" viewBox="0 0 8 4"><path d="M0 .5h8L4 3z" fill="#a9aeb3"/></svg></button>
        <div class="scroll"></div>
        <div class="prompt">
          <div class="say"><span>Specify base point or</span><svg width="11" height="12" viewBox="0 0 11 12"><path d="M.5.5h10v11H.5z" fill="#e6e6f2" stroke="#3b3b9a"/><path d="M5.500 2v5M3 4.500h5M3 9h5" fill="none" stroke="#111"/></svg></div>
          <label class="val live"><input aria-label="X" value="2.7089" /></label>
          <label class="val idle"><input aria-label="Y" value="0.3279" /></label>
        </div>
      </main>`;
  }

  private st = (label: string, body: SVGTemplateResult) => html`<button aria-label=${label}><svg width="16" height="16" viewBox="0 0 16 16">${body}</svg></button>`;

  private footer() {
    const sheet = (label: string, on: boolean) => html`
      <button class=${classMap({ sheet: true, on })}>
        <svg class="shape" viewBox="0 0 59 16" preserveAspectRatio="none"><path d="M0 0h59c-5 1-3 16-9 16H10C4 16 5 1 0 0z" fill=${on ? "#777" : "#4c4c4c"} /></svg><span>${label}</span>
      </button>`;
    const man = (fill: string) => svg`<path d="M8 0l2 6 1 5 4 4.500H11.500L8 12.500l-3.500 3H1L5 11l1-5z" fill=${fill} />`;
    return html`
      <footer class="foot">
        <div class="sheets">${sheet("Model", true)}${sheet("Layout1", false)}${sheet("Layout2", false)}${this.plus("New layout")}</div>
        <div class="status">
          <div class="box"><button class="word">MODEL</button></div>
          <div class="box">
            ${this.st("Grid", svg`<path d="M3.500 1v14M6.500 1v14M9.500 1v14M12.500 1v14M1 3.500h14M1 6.500h14M1 9.500h14M1 12.500h14" stroke="#3f93f0" stroke-width="1.200"/>`)}
            ${this.st("Snap", svg`<path d="M1 2.500h14M1 5.500h14M1 8.500h14M1 11.500h14M1 14.500h14" stroke="#b9b9b9" stroke-dasharray="1 2"/>`)}
            ${this.drop("Snap")}
          </div>
          <div class="box">
            ${this.st("Ortho", svg`<path d="M3 1v12.500h12M3 9.500h4v4" fill="none" stroke="#3f93f0" stroke-width="1.600"/>`)}
            ${this.st("Polar", svg`<path d="M12.500 4A6 6 0 1 0 14 9M8 8.500h8M8 8.500L12.500 4" fill="none" stroke="#bdbdbd" stroke-width="1.400"/>`)}
            ${this.drop("Polar")}
            ${this.st("Isoplane", svg`<path d="M8 0v8M1 1l14 14M1 15l7-7" fill="none" stroke="#bdbdbd" stroke-width="1.200"/>`)}
            ${this.drop("Isoplane")}
          </div>
          <div class="box">
            ${this.st("Object snap tracking", svg`<path d="M2 13.500h13M2 13L13 3" fill="none" stroke="#bdbdbd" stroke-width="1.500"/>`)}
            ${this.st("Object snap", svg`<path d="M3 3h11v11H3z" fill="none" stroke="#3f93f0" stroke-width="1.500"/><path d="M1 1h4v4H1z" fill="#13c41c"/>`)}
            ${this.drop("Object snap")}
          </div>
          <div class="box pad">
            ${this.st("Annotation visibility", svg`${man("#3f93f0")}<circle cx="12" cy="4" r="2.500" fill="#484848" stroke="#3f93f0" stroke-width="1.200"/>`)}
            ${this.st("Auto scale", svg`${man("#c9c9c9")}<path d="M10 1l4 3-3 4" fill="none" stroke="#c9c9c9" stroke-width="1.500"/>`)}
            ${this.st("Annotation scale", man("#c9c9c9"))}
            <button class="ratio">1:1</button>${this.drop("Scale")}
          </div>
          <div class="box">
            ${this.st("Workspace switching", svg`<circle cx="8" cy="8" r="3.500" fill="none" stroke="#d0d0d0" stroke-width="3"/><path d="M8 2v2M8 12v2M2 8h2M12 8h2M4 4l1 1M11 11l1 1M4 12l1-1M11 5l1-1" stroke="#d0d0d0" stroke-width="2"/>`)}
            ${this.drop("Workspace")}
          </div>
          <div class="box">${this.st("Annotation monitor", svg`<path d="M8 1.500v13M1.500 8h13" stroke="#d0d0d0" stroke-width="1.700"/>`)}</div>
          <div class="box pad">${this.st("Isolate objects", svg`<path d="M1.500 2.500h6v6h-6zM8 9.500l3.500 5h-7z" fill="none" stroke="#d0d0d0" stroke-width="1.300"/><circle cx="12" cy="7" r="2.800" fill="none" stroke="#d0d0d0" stroke-width="1.300"/>`)}</div>
          <div class="box pad">${this.st("Hardware acceleration", svg`<circle cx="8" cy="8" r="7.300" fill="#0e5fae" stroke="#2f8be8" stroke-width="1.300"/><path d="M7.500 8.500L11 5" stroke="#072c55" stroke-width="1.500"/>`)}</div>
          <div class="box pad">
            ${this.st("Clean screen", svg`<path d="M1 2.500h14v11H1z" fill="none" stroke="#d8d8d8" stroke-width="1.300"/><path d="M9 4.500h4v4zM3 8v4h4zM11.500 6L9 8M4 11l3-2.500" fill="#d8d8d8" stroke="#d8d8d8"/>`)}
            ${this.st("Customization", svg`<path d="M1 3h14M1 8h14M1 13h14" stroke="#d8d8d8" stroke-width="1.700"/>`)}
          </div>
        </div>
      </footer>`;
  }

  render() {
    return html`
      <svg class="defs" aria-hidden="true"><defs>
        <linearGradient id="pale" x2="0" y2="1"><stop stop-color="#fff"/><stop offset="1" stop-color="#b9bcbf"/></linearGradient>
        <linearGradient id="drum"><stop stop-color="#d8d8d8"/><stop offset=".4" stop-color="#fff"/><stop offset="1" stop-color="#aeb0b2"/></linearGradient>
        <linearGradient id="blue" x2="0" y2="1"><stop stop-color="#cfe0f5"/><stop offset="1" stop-color="#9db9dc"/></linearGradient>
        <linearGradient id="tabOn" x2="0" y2="1"><stop stop-color="#7c7c7c"/><stop offset="1" stop-color="#5f6062"/></linearGradient>
      </defs></svg>
      ${this.header()}${this.ribbon()}
      <div class="files">${this.fileTab("Start", false)}${this.fileTab("Drawing1*", true)}${this.plus("New drawing")}</div>
      ${this.stage()}${this.footer()}`;
  }
}
